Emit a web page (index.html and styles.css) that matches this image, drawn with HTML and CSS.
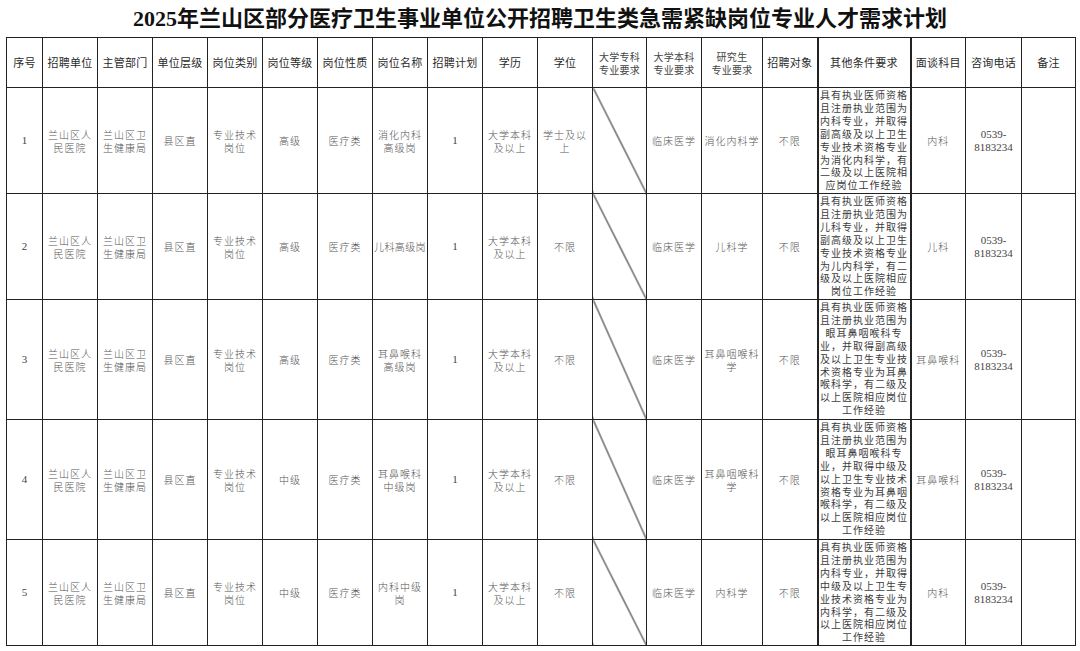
FILE: index.html
```html
<!DOCTYPE html>
<html lang="zh-CN">
<head>
<meta charset="utf-8">
<title>2025年兰山区部分医疗卫生事业单位公开招聘卫生类急需紧缺岗位专业人才需求计划</title>
<link rel="stylesheet" href="styles.css">
</head>
<body>
<div class="page">
  <h1 class="title"><span class="num">2025</span>年兰山区部分医疗卫生事业单位公开招聘卫生类急需紧缺岗位专业人才需求计划</h1>
  <table class="plan">
    <colgroup>
      <col class="c36"><col class="c55"><col class="c55"><col class="c55"><col class="c55"><col class="c55"><col class="c55"><col class="c55"><col class="c55"><col class="c55"><col class="c55"><col class="c54"><col class="c55"><col class="c61"><col class="c55"><col class="c93"><col class="c55"><col class="c56"><col class="c54">
    </colgroup>
    <thead>
      <tr class="head">
        <th>序号</th><th>招聘单位</th><th>主管部门</th><th>单位层级</th><th>岗位类别</th><th>岗位等级</th><th>岗位性质</th><th>岗位名称</th><th>招聘计划</th><th>学历</th><th>学位</th>
        <th class="two">大学专科<br>专业要求</th><th class="two">大学本科<br>专业要求</th><th class="two">研究生<br>专业要求</th>
        <th>招聘对象</th><th class="other-h">其他条件要求</th><th>面谈科目</th><th>咨询电话</th><th>备注</th>
      </tr>
    </thead>
    <tbody>
      <tr class="row-a">
        <td class="num">1</td><td>兰山区人<br>民医院</td><td>兰山区卫<br>生健康局</td><td>县区直</td><td>专业技术<br>岗位</td><td>高级</td><td>医疗类</td><td>消化内科<br>高级岗</td><td class="num">1</td><td>大学本科<br>及以上</td><td>学士及以<br>上</td><td class="slash"></td><td>临床医学</td><td>消化内科学</td><td>不限</td>
        <td class="other"><div class="clip">具有执业医师资格<br>且注册执业范围为<br>内科专业，并取得<br>副高级及以上卫生<br>专业技术资格专业<br>为消化内科学，有<br>二级及以上医院相<br>应岗位工作经验</div></td>
        <td>内科</td><td class="num">0539-<br>8183234</td><td></td>
      </tr>
      <tr class="row-a">
        <td class="num">2</td><td>兰山区人<br>民医院</td><td>兰山区卫<br>生健康局</td><td>县区直</td><td>专业技术<br>岗位</td><td>高级</td><td>医疗类</td><td class="tight">儿科高级岗</td><td class="num">1</td><td>大学本科<br>及以上</td><td>不限</td><td class="slash"></td><td>临床医学</td><td>儿科学</td><td>不限</td>
        <td class="other"><div class="clip">具有执业医师资格<br>且注册执业范围为<br>儿科专业，并取得<br>副高级及以上卫生<br>专业技术资格专业<br>为儿内科学，有二<br>级及以上医院相应<br>岗位工作经验</div></td>
        <td>儿科</td><td class="num">0539-<br>8183234</td><td></td>
      </tr>
      <tr class="row-b">
        <td class="num">3</td><td>兰山区人<br>民医院</td><td>兰山区卫<br>生健康局</td><td>县区直</td><td>专业技术<br>岗位</td><td>高级</td><td>医疗类</td><td>耳鼻喉科<br>高级岗</td><td class="num">1</td><td>大学本科<br>及以上</td><td>不限</td><td class="slash"></td><td>临床医学</td><td>耳鼻咽喉科<br>学</td><td>不限</td>
        <td class="other"><div class="clip">具有执业医师资格<br>且注册执业范围为<br>眼耳鼻咽喉科专<br>业，并取得副高级<br>及以上卫生专业技<br>术资格专业为耳鼻<br>喉科学，有二级及<br>以上医院相应岗位<br>工作经验</div></td>
        <td>耳鼻喉科</td><td class="num">0539-<br>8183234</td><td></td>
      </tr>
      <tr class="row-b">
        <td class="num">4</td><td>兰山区人<br>民医院</td><td>兰山区卫<br>生健康局</td><td>县区直</td><td>专业技术<br>岗位</td><td>中级</td><td>医疗类</td><td>耳鼻喉科<br>中级岗</td><td class="num">1</td><td>大学本科<br>及以上</td><td>不限</td><td class="slash"></td><td>临床医学</td><td>耳鼻咽喉科<br>学</td><td>不限</td>
        <td class="other"><div class="clip">具有执业医师资格<br>且注册执业范围为<br>眼耳鼻咽喉科专<br>业，并取得中级及<br>以上卫生专业技术<br>资格专业为耳鼻咽<br>喉科学，有二级及<br>以上医院相应岗位<br>工作经验</div></td>
        <td>耳鼻喉科</td><td class="num">0539-<br>8183234</td><td></td>
      </tr>
      <tr class="row-a">
        <td class="num">5</td><td>兰山区人<br>民医院</td><td>兰山区卫<br>生健康局</td><td>县区直</td><td>专业技术<br>岗位</td><td>中级</td><td>医疗类</td><td>内科中级<br>岗</td><td class="num">1</td><td>大学本科<br>及以上</td><td>不限</td><td class="slash"></td><td>临床医学</td><td>内科学</td><td>不限</td>
        <td class="other"><div class="clip">具有执业医师资格<br>且注册执业范围为<br>内科专业，并取得<br>中级及以上卫生专<br>业技术资格专业为<br>内科学，有二级及<br>以上医院相应岗位<br>工作经验</div></td>
        <td>内科</td><td class="num">0539-<br>8183234</td><td></td>
      </tr>
    </tbody>
  </table>
</div>
</body>
</html>
```

FILE: styles.css
```css
html, body {
  margin: 0;
  padding: 0;
  background: #ffffff;
}

.page {
  width: 1080px;
  height: 651px;
  overflow: hidden;
  font-family: "Noto Sans CJK SC", "Noto Sans", sans-serif;
}

.title {
  margin: 0;
  height: 37px;
  line-height: 32px;
  text-align: center;
  font-size: 22px;
  font-weight: 700;
  color: #111;
  letter-spacing: 0;
}

.title .num {
  font-family: "Liberation Serif", serif;
  font-weight: 700;
}

.plan {
  margin-left: 6px;
  border-collapse: collapse;
  table-layout: fixed;
  width: 1069px;
}

.c36 { width: 36px; }
.c54 { width: 54px; }
.c55 { width: 55px; }
.c56 { width: 56px; }
.c61 { width: 61px; }
.c93 { width: 93px; }

.plan th,
.plan td {
  border: 1px solid #222;
  padding: 0;
  text-align: center;
  vertical-align: middle;
  white-space: nowrap;
  overflow: hidden;
}

.plan th {
  font-size: 11px;
  font-weight: 400;
  color: #2a2a2a;
  letter-spacing: 0.3px;
  line-height: 13px;
}

.plan th.two {
  font-size: 10px;
  color: #444;
  line-height: 13px;
}

.head { height: 50px; }
.row-a { height: 106px; }
.row-b { height: 120px; }

.plan td {
  font-size: 10px;
  font-weight: 300;
  color: #555;
  letter-spacing: 1px;
  line-height: 13px;
}

.plan td.tight {
  letter-spacing: 0.4px;
}

.plan td.num {
  font-family: "Liberation Serif", serif;
  font-size: 11px;
  letter-spacing: 0;
  color: #444;
  line-height: 13px;
}

.plan .other-h,
.plan .other {
  border-left: 2px solid #222;
  border-right: 2px solid #222;
}

.plan td.other {
  vertical-align: top;
  color: #3c3c3c;
  font-weight: 400;
}

.row-a .clip { height: 105px; }
.row-b .clip { height: 119px; }

.clip {
  overflow: hidden;
  padding-top: 1px;
  box-sizing: border-box;
  line-height: 12.9px;
  letter-spacing: 1px;
}

.plan td.slash {
  background: linear-gradient(to top right,
    transparent calc(50% - 1px),
    #222 50%,
    transparent calc(50% + 1px));
}
```
